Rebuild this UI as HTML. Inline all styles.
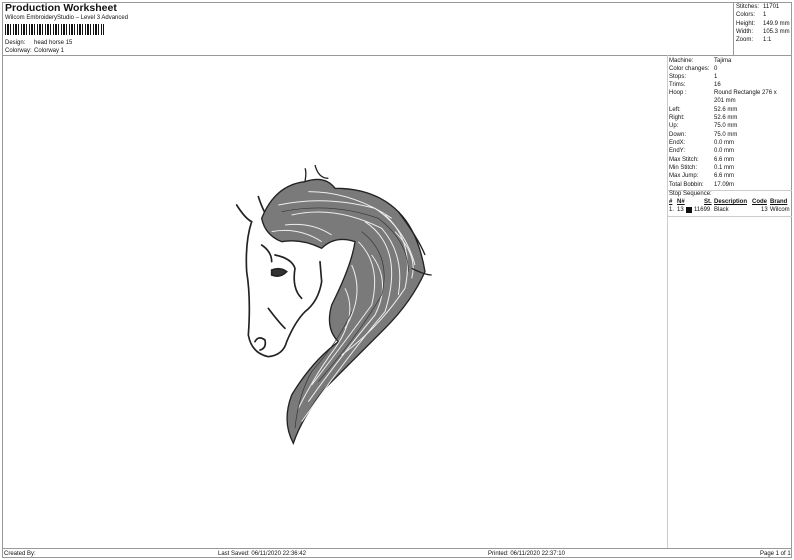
<html><head><style>
body{margin:0;width:794px;height:560px;background:#fff;font-family:"Liberation Sans",sans-serif;color:#111;position:relative;overflow:hidden}
.t{position:absolute;font-size:6px;white-space:nowrap;line-height:8.4px}
.ln{position:absolute;background:#999}
</style></head><body>
<div class="ln" style="left:2px;top:2px;width:790px;height:1px"></div>
<div class="ln" style="left:2px;top:557px;width:790px;height:1px"></div>
<div class="ln" style="left:2px;top:2px;width:1px;height:556px"></div>
<div class="ln" style="left:791px;top:2px;width:1px;height:556px"></div>
<div class="ln" style="left:2px;top:55px;width:790px;height:1px"></div>
<div class="ln" style="left:733px;top:2px;width:1px;height:53px"></div>
<div class="ln" style="left:667px;top:55px;width:1px;height:493px;background:#ccc"></div>
<div class="ln" style="left:2px;top:548px;width:790px;height:1px"></div>
<div class="ln" style="left:667px;top:190px;width:125px;height:1px;background:#ccc"></div>
<div class="ln" style="left:667px;top:216px;width:125px;height:1px;background:#ccc"></div>
<div class="t" style="left:5px;top:2px;font-size:10.5px;font-weight:bold;line-height:12px">Production Worksheet</div>
<div class="t" style="left:5px;top:14px">Wilcom EmbroideryStudio – Level 3 Advanced</div>
<div style="position:absolute;left:5px;top:24px;width:99px;height:11px;background:repeating-linear-gradient(90deg,#111 0 1px,#fff 1px 2px,#111 2px 4px,#fff 4px 5px,#111 5px 6px,#fff 6px 8px)"></div>
<div class="t" style="left:5px;top:39px">Design:</div><div class="t" style="left:34px;top:39px">head horse 15</div>
<div class="t" style="left:5px;top:47px">Colorway:</div><div class="t" style="left:34px;top:47px">Colorway 1</div>
<div class="t" style="left:736px;top:3px">Stitches:</div><div class="t" style="left:763px;top:3px">11701</div>
<div class="t" style="left:736px;top:11px">Colors:</div><div class="t" style="left:763px;top:11px">1</div>
<div class="t" style="left:736px;top:20px">Height:</div><div class="t" style="left:763px;top:20px">149.9 mm</div>
<div class="t" style="left:736px;top:28px">Width:</div><div class="t" style="left:763px;top:28px">105.3 mm</div>
<div class="t" style="left:736px;top:36px">Zoom:</div><div class="t" style="left:763px;top:36px">1:1</div>
<div class="t" style="left:669px;top:57px">Machine:</div><div class="t" style="left:714px;top:57px">Tajima</div>
<div class="t" style="left:669px;top:65px">Color changes:</div><div class="t" style="left:714px;top:65px">0</div>
<div class="t" style="left:669px;top:73px">Stops:</div><div class="t" style="left:714px;top:73px">1</div>
<div class="t" style="left:669px;top:81px">Trims:</div><div class="t" style="left:714px;top:81px">16</div>
<div class="t" style="left:669px;top:89px">Hoop :</div><div class="t" style="left:714px;top:89px">Round Rectangle 276 x<br>201 mm</div>
<div class="t" style="left:669px;top:106px">Left:</div><div class="t" style="left:714px;top:106px">52.6 mm</div>
<div class="t" style="left:669px;top:114px">Right:</div><div class="t" style="left:714px;top:114px">52.6 mm</div>
<div class="t" style="left:669px;top:122px">Up:</div><div class="t" style="left:714px;top:122px">75.0 mm</div>
<div class="t" style="left:669px;top:131px">Down:</div><div class="t" style="left:714px;top:131px">75.0 mm</div>
<div class="t" style="left:669px;top:139px">EndX:</div><div class="t" style="left:714px;top:139px">0.0 mm</div>
<div class="t" style="left:669px;top:147px">EndY:</div><div class="t" style="left:714px;top:147px">0.0 mm</div>
<div class="t" style="left:669px;top:156px">Max Stitch:</div><div class="t" style="left:714px;top:156px">6.6 mm</div>
<div class="t" style="left:669px;top:164px">Min Stitch:</div><div class="t" style="left:714px;top:164px">0.1 mm</div>
<div class="t" style="left:669px;top:172px">Max Jump:</div><div class="t" style="left:714px;top:172px">6.6 mm</div>
<div class="t" style="left:669px;top:181px">Total Bobbin:</div><div class="t" style="left:714px;top:181px">17.09m</div>
<div class="t" style="left:669px;top:190px">Stop Sequence:</div>
<div class="t" style="left:669px;top:198px;font-weight:bold;text-decoration:underline">#</div>
<div class="t" style="left:677px;top:198px;font-weight:bold;text-decoration:underline">N#</div>
<div class="t" style="left:704px;top:198px;font-weight:bold;text-decoration:underline">St.</div>
<div class="t" style="left:714px;top:198px;font-weight:bold;text-decoration:underline">Description</div>
<div class="t" style="left:752px;top:198px;font-weight:bold;text-decoration:underline">Code</div>
<div class="t" style="left:770px;top:198px;font-weight:bold;text-decoration:underline">Brand</div>
<div class="t" style="left:669px;top:206px">1.</div><div class="t" style="left:677px;top:206px">13</div>
<div style="position:absolute;left:686px;top:207px;width:6px;height:6px;background:#111"></div>
<div class="t" style="left:694px;top:206px">11699</div><div class="t" style="left:714px;top:206px">Black</div>
<div class="t" style="left:761px;top:206px">13</div><div class="t" style="left:770px;top:206px">Wilcom</div>
<div class="t" style="left:4px;top:550px">Created By:</div>
<div class="t" style="left:218px;top:550px">Last Saved: 06/11/2020 22:36:42</div>
<div class="t" style="left:488px;top:550px">Printed: 06/11/2020 22:37:10</div>
<div class="t" style="left:760px;top:550px">Page 1 of 1</div>
<svg style="position:absolute;left:225px;top:155px" width="220" height="295" viewBox="0 0 660 885">
<g fill="none" stroke="#222" stroke-width="5" stroke-linecap="round">
<path d="M35,150 Q60,190 80,200 Q60,260 65,350 Q78,430 70,540 Q80,595 130,605 Q175,600 185,560 Q210,500 240,470 Q280,440 290,380 L285,320"/>
<path d="M100,125 Q115,170 130,190"/>
<path d="M140,345 Q165,335 185,350 Q165,370 140,360Z" fill="#333"/>
<path d="M90,560 Q100,540 120,555 Q125,580 105,585"/>
<path d="M150,300 Q200,310 210,340 Q200,400 230,430"/>
<path d="M110,270 Q140,290 140,320"/>
<path d="M130,460 Q160,500 180,520"/>
</g>
<path d="M110,190 Q150,90 240,80 Q300,60 330,100 Q450,100 520,170 Q580,230 600,350 Q560,440 480,520 Q380,620 300,700 Q230,790 205,865 Q170,800 200,720 Q260,620 340,560 Q300,520 320,450 Q380,330 390,260 Q330,240 290,280 Q230,250 170,260 Q120,240 110,190Z" fill="#7a7a7a" stroke="#222" stroke-width="4"/>
<g fill="none" stroke="#eee" stroke-width="3">
<path d="M160,150 Q300,120 450,160 Q540,220 570,330"/>
<path d="M200,180 Q330,150 470,220 Q540,300 520,420"/>
<path d="M400,260 Q470,330 440,450 Q360,560 260,690"/>
<path d="M420,200 Q540,280 480,470 Q370,600 230,800"/>
<path d="M360,400 Q400,480 330,580 Q270,660 220,760"/>
<path d="M480,180 Q570,260 540,400 Q460,520 350,600"/>
<path d="M180,210 Q260,200 320,240"/>
<path d="M140,230 Q220,215 290,260"/>
<path d="M250,110 Q380,110 500,190"/>
<path d="M440,300 Q500,380 450,480 Q350,600 250,740"/>
<path d="M380,330 Q420,420 360,520"/>
<path d="M510,230 Q580,300 560,370"/>
</g>
<g fill="none" stroke="#333" stroke-width="2">
<path d="M170,170 Q320,140 460,190 Q550,260 550,350"/>
<path d="M410,230 Q500,300 470,420 Q400,540 280,680"/>
<path d="M380,470 Q340,560 260,650 Q220,720 210,820"/>
</g>
<g fill="none" stroke="#222" stroke-width="4">
<path d="M240,80 Q245,50 240,40"/><path d="M270,30 Q280,70 310,70"/><path d="M520,170 Q580,250 600,300"/><path d="M560,340 Q600,360 620,360"/>
</g>
</svg>
</body></html>
